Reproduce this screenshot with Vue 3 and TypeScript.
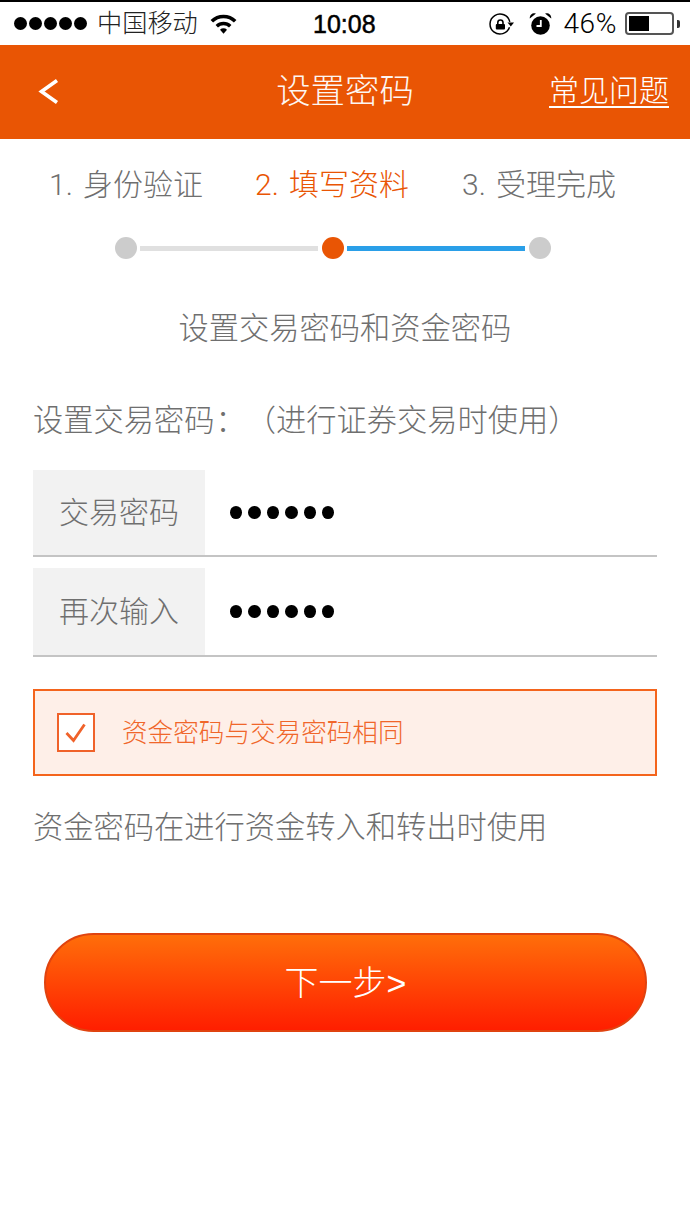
<script setup lang="ts">
const steps = [
  { n: '1.', t: '身份验证', on: false },
  { n: '2.', t: '填写资料', on: true },
  { n: '3.', t: '受理完成', on: false },
]
const rows = ['交易密码', '再次输入']
const pw = [1, 2, 3, 4, 5, 6]
const signal = [1, 2, 3, 4, 5]
</script>

<template>
  <div class="page">
    <header class="status">
      <div class="st-left">
        <span class="signal"><i v-for="s in signal" :key="s"></i></span>
        <span class="carrier">中国移动</span>
        <svg class="wifi" width="27" height="20" viewBox="0 0 27 20">
          <path d="M1.83 7.33 A16.5 16.5 0 0 1 25.17 7.33" fill="none" stroke="#000" stroke-width="3.6"/>
          <path d="M6.78 12.28 A9.5 9.5 0 0 1 20.22 12.28" fill="none" stroke="#000" stroke-width="3.4"/>
          <path d="M13.5 19.8 L10 15.8 A5 5 0 0 1 17 15.8 Z" fill="#000"/>
        </svg>
      </div>
      <div class="time">10:08</div>
      <div class="st-right">
        <svg class="lock" width="25" height="24" viewBox="0 0 25 24">
          <path d="M20.5 15.3 A10 10 0 1 1 20.8 9.8" fill="none" stroke="#000" stroke-width="1.5"/>
          <path d="M18.5 10.5 L25 10.5 L21.8 14.5 Z" fill="#000"/>
          <rect x="6.8" y="12" width="9.2" height="5.6" rx="1" fill="#000"/>
          <path d="M8.8 12 V10.6 A2.6 2.6 0 0 1 14 10.6 V12" fill="none" stroke="#000" stroke-width="1.6"/>
        </svg>
        <svg class="alarm" width="23" height="24" viewBox="0 0 23 24">
          <circle cx="11.5" cy="13.5" r="9.3" fill="#000"/>
          <path d="M0.8 6.5 A4.6 4.6 0 0 1 7 1.6 Z M22.2 6.5 A4.6 4.6 0 0 0 16 1.6 Z" fill="#000"/>
          <path d="M11.8 8 V14 H7.5" fill="none" stroke="#fff" stroke-width="1.8"/>
        </svg>
        <span class="pct">46%</span>
        <span class="battery"><span class="level"></span></span>
        <span class="nub"></span>
      </div>
    </header>

    <nav class="nav">
      <svg class="back" width="21" height="27" viewBox="0 0 21 27">
        <path d="M19 2.5 L3.5 13.5 L19 24.5" fill="none" stroke="#fff" stroke-width="3.6"/>
      </svg>
      <h1 class="title">设置密码</h1>
      <a class="faq">常见问题</a>
    </nav>

    <main class="main">
      <div class="steps">
        <div v-for="s in steps" :key="s.n" class="step" :class="{ on: s.on }">
          <span class="num">{{ s.n }}</span>{{ s.t }}
        </div>
      </div>

      <div class="track">
        <span class="dot"></span>
        <span class="bar gray"></span>
        <span class="dot cur"></span>
        <span class="bar blue"></span>
        <span class="dot"></span>
      </div>

      <p class="sub">设置交易密码和资金密码</p>
      <p class="label">设置交易密码<span class="colon">：</span>（进行证券交易时使用）</p>

      <div class="rows">
        <div v-for="r in rows" :key="r" class="row">
          <div class="row-name">{{ r }}</div>
          <div class="pw"><i v-for="p in pw" :key="p"></i></div>
        </div>
      </div>

      <div class="same">
        <span class="box">
          <svg width="22" height="22" viewBox="0 0 22 22">
            <path d="M1.5 11 L8.5 18.5 L19.5 2.5" fill="none" stroke="#f0622a" stroke-width="2.8"/>
          </svg>
        </span>
        <span class="same-text">资金密码与交易密码相同</span>
      </div>

      <p class="hint">资金密码在进行资金转入和转出时使用</p>

      <button class="next"><span class="next-text">下一步&gt;</span></button>
    </main>
  </div>
</template>

<style>
html, body { margin: 0; padding: 0; background: #fff; }
</style>

<style scoped>
.page {
  width: 690px;
  height: 1227px;
  background: #fff;
  overflow: hidden;
  font-family: "Liberation Sans", "Noto Sans CJK SC", sans-serif;
  font-weight: 300;
  color: #6f6f6f;
}
.status {
  height: 43px;
  border-top: 2px solid #000;
  display: flex;
  align-items: center;
  justify-content: space-between;
  padding: 0 10px 0 14px;
  color: #000;
  position: relative;
}
.st-left, .st-right { display: flex; align-items: center; }
.signal { display: flex; gap: 2px; }
.signal i { width: 13px; height: 13px; border-radius: 50%; background: #000; display: block; }
.carrier { font-size: 25.2px; margin-left: 10px; line-height: 43px; color: #222; }
.wifi { margin-left: 12px; }
.time {
  position: absolute;
  left: 313px;
  top: 4px;
  font-size: 25px;
  line-height: 36px;
  font-weight: 500;
  -webkit-text-stroke: 0.5px #000;
}
.lock { margin-right: 15px; }
.alarm { margin-right: 11px; }
.pct { font-family: Roboto, "Liberation Sans", sans-serif; font-size: 28px; color: #000; margin-right: 8px; letter-spacing: 0.6px; }
.battery {
  width: 49px;
  height: 23px;
  box-sizing: border-box;
  border: 2px solid #555;
  border-radius: 4px;
  padding: 2px;
  display: block;
}
.level { display: block; width: 20px; height: 100%; background: #000; }
.nub { width: 3px; height: 8px; background: #333; margin-left: 3px; border-radius: 0 2px 2px 0; }

.nav {
  height: 94px;
  background: #e95504;
  display: grid;
  grid-template-columns: minmax(0, 1fr) auto minmax(0, 1fr);
  align-items: center;
  padding: 0 21px;
  color: #fff;
}
.title { margin: -2px 0 0 0; font-size: 34.4px; font-weight: 300; line-height: 94px; color: #fff; opacity: 0.95; }
.back { justify-self: start; margin: -1px 0 0 17px; }
.faq {
  justify-self: end;
  font-size: 30px;
  line-height: 34px;
  text-decoration: none;
  border-bottom: 2px solid #fff;
  margin-top: -2px;
  height: 32px;
  color: #fff;
}

.main { display: flex; flex-direction: column; padding: 0 33px; }
.steps {
  display: flex;
  margin: 27px 0 0 16px;
  font-size: 30px;
  line-height: 38px;
  white-space: nowrap;
}
.step { width: 207px; flex: none; }
.step.on { color: #e95504; margin-left: -1px; }
.num { font-family: Roboto, "Liberation Sans", sans-serif; font-weight: 300; display: inline-block; width: 34px; }
.track {
  display: flex;
  align-items: center;
  margin: 33px 0 0 82px;
  height: 22px;
}
.dot { width: 22px; height: 22px; border-radius: 50%; background: #ccc; flex: none; }
.dot.cur { background: #e95504; }
.bar { height: 5px; width: 178px; flex: none; margin: 0 4px 0 3px; }
.bar.gray { background: #e0e0e0; }
.bar.blue { background: #2a9fe8; }

.sub {
  margin: 50px 0 0;
  text-align: center;
  font-size: 30.25px;
  line-height: 40px;
}
.label {
  margin: 52px 0 0;
  font-size: 30.25px;
  line-height: 40px;
  white-space: nowrap;
}
.colon { margin: 0 15px 0 1px; }
.rows { margin-top: 29px; display: flex; flex-direction: column; gap: 11px; }
.row {
  height: 85px;
  border-bottom: 2px solid #c4c4c4;
  display: flex;
  align-items: stretch;
  width: 624px;
}
.row + .row { height: 87px; }
.row-name {
  width: 172px;
  background: #f2f2f2;
  font-size: 30px;
  line-height: 85px;
  text-align: center;
  flex: none;
}
.row + .row .row-name { line-height: 87px; }
.pw { display: flex; align-items: center; gap: 6px; margin-left: 25px; }
.pw i { display: block; width: 12.4px; height: 13px; border-radius: 50%; background: #000; }

.same {
  margin-top: 32px;
  width: 624px;
  height: 87px;
  box-sizing: border-box;
  border: 2px solid #f4641c;
  background: #feefe8;
  display: flex;
  align-items: center;
  padding-left: 22px;
}
.box {
  width: 38px;
  height: 39px;
  box-sizing: border-box;
  border: 2.5px solid #f0622a;
  background: #fff;
  display: flex;
  align-items: center;
  justify-content: center;
}
.same-text { margin: -4px 0 0 27px; font-size: 25.6px; color: #f0662a; }
.hint { margin: 31px 0 0; font-size: 30.25px; line-height: 42px; }

.next {
  margin: 84px 0 0 11px;
  width: 603px;
  height: 99px;
  box-sizing: border-box;
  border: 2px solid #e0430f;
  border-radius: 50px;
  background: linear-gradient(#ff6e0a, #ff1e00);
  color: #fff;
  font-family: inherit;
  font-weight: 300;
  font-size: 34px;
  padding: 0 0 5px;
}
</style>
